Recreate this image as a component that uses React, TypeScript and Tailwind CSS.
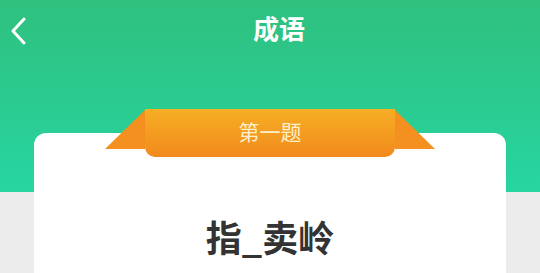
import React from 'react';

// Quiz header: green nav + question card with orange ribbon
const font = { fontFamily: '"Noto Sans CJK SC", "Noto Sans", sans-serif' };

const BackIcon = () => (
  <svg width="18" height="28" viewBox="0 0 18 28" fill="none">
    <path d="M15 2 L4 14 L15 26" stroke="white" strokeWidth="3" strokeLinecap="round" strokeLinejoin="round" />
  </svg>
);

const Ribbon = ({ title }: { title: string }) => (
  <div className="absolute left-1/2 -translate-x-1/2 top-[-24px] flex items-start w-[330px]">
    <div className="w-[40px] h-[39px] mt-[1px] bg-[#f3901f] [clip-path:polygon(100%_0,100%_100%,0_100%)]" />
    <div className="w-[250px] h-[48px] pb-[3px] flex items-center justify-center rounded-b-[10px] bg-[linear-gradient(180deg,#f6ae24,#f28a1d)]">
      <span className="text-[21px] leading-none text-[#fdf1cc] font-normal">{title}</span>
    </div>
    <div className="w-[40px] h-[39px] mt-[1px] bg-[#f3901f] [clip-path:polygon(0_0,100%_100%,0_100%)]" />
  </div>
);

export default function App() {
  return (
    <div
      className="w-full h-[273px] overflow-hidden bg-[linear-gradient(180deg,#2fc07e_0px,#27d5a1_192px,#ececec_192px)]"
      style={font}
    >
      <div className="relative h-[56px] pl-[18px] flex items-center justify-center">
        <button className="absolute left-[9px] top-[17px]">
          <BackIcon />
        </button>
        <h1 className="text-[26px] font-bold text-white leading-none">成语</h1>
      </div>
      <div className="relative mx-[34px] mt-[77px] h-[200px] rounded-[12px] bg-white">
        <Ribbon title="第一题" />
        <div className="pt-[83px] flex justify-center">
          <span className="text-[36px] font-bold text-[#333333] leading-[40px]">指_卖岭</span>
        </div>
      </div>
    </div>
  );
}
